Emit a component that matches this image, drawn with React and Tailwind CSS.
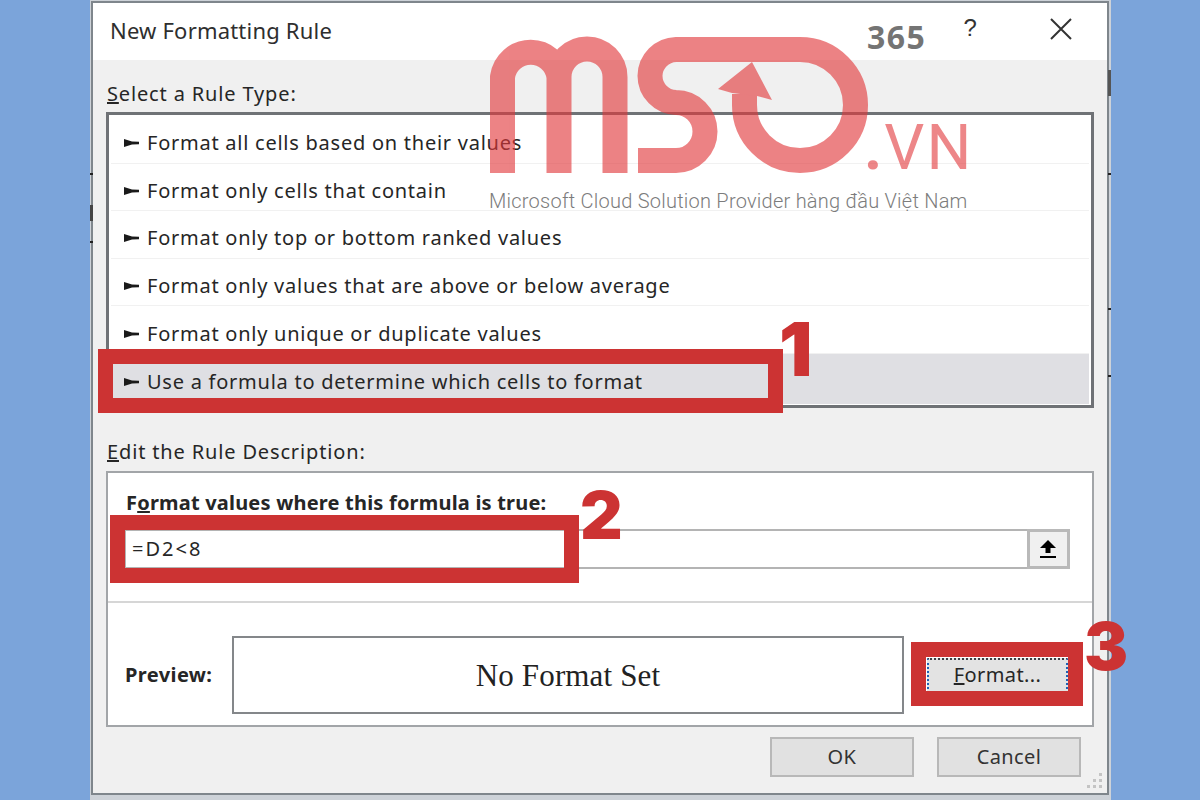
import React from "react";

const rules = [
  "Format all cells based on their values",
  "Format only cells that contain",
  "Format only top or bottom ranked values",
  "Format only values that are above or below average",
  "Format only unique or duplicate values",
  "Use a formula to determine which cells to format",
];

function Pointer() {
  return (
    <svg width="16" height="10" viewBox="0 0 16 10" className="shrink-0">
      <polygon points="1,1 9,3.5 16,3.8 16,6.2 9,6.5 1,9" fill="#1a1a1a" />
    </svg>
  );
}

function Annot({ className }) {
  return <div className={"absolute border-[15px] border-[#cc3333] " + className} />;
}

export default function App() {
  return (
    <div className="relative w-[1200px] h-[800px] overflow-hidden bg-[#7ba4da] font-['Noto_Sans',sans-serif] text-[#262626]">
      <div className="ml-[90px] w-[1021px] h-[800px] bg-[#cdd2d8] pt-[1px] pl-[1px] pr-[2px] pb-[5px]">
        <div className="h-full border-2 border-[#7f868c] flex flex-col bg-[#f0f0f0] relative">
          <div className="h-[57px] bg-white flex items-center pl-[17px] pb-[4px] text-[22px] leading-none tracking-[0.2px] text-[#2e2e2e]">
            New Formatting Rule
            <span className="ml-auto mr-[72px] text-[24px] font-['Liberation_Sans',sans-serif] text-[#333] mb-[4px]">?</span>
            <svg width="24" height="24" viewBox="0 0 24 24" className="mr-[34px] mb-[2px]">
              <path d="M2 2 L22 22 M22 2 L2 22" stroke="#333" strokeWidth="2" fill="none" />
            </svg>
          </div>

          <div className="flex-1 px-[13px] flex flex-col">
            <div className="h-[28px] mt-[20px] mb-[4px] pl-[1px] flex items-center text-[20px] tracking-[0.85px] leading-none">
              <span><span className="underline">S</span>elect a Rule Type:</span>
            </div>

            <div className="h-[296px] border-[3px] border-[#6f7276] bg-white px-[2px] pt-[1px]">
              {rules.map((r, i) => (
                <div
                  key={r}
                  className={
                    i === 5
                      ? "h-[50px] pt-[6px] pl-[12px] flex items-center gap-[8px] bg-[#dfdfe3] text-[20px] tracking-[0.75px] leading-none"
                      : "h-[47.6px] pt-[8px] pl-[12px] flex items-center gap-[8px] border-b border-[#f1f1f1] text-[20px] tracking-[0.75px] leading-none"
                  }
                >
                  <Pointer />
                  <span>{r}</span>
                </div>
              ))}
            </div>

            <div className="h-[28px] mt-[30px] mb-[5px] pl-[1px] flex items-center text-[20px] tracking-[0.85px] leading-none">
              <span><span className="underline">E</span>dit the Rule Description:</span>
            </div>

            <div className="h-[256px] border-2 border-[#a2a5a8] bg-white flex flex-col">
              <div className="h-[26px] mt-[17px] pl-[18px] flex items-center text-[20px] font-bold leading-none tracking-[0.2px]">
                <span>F<span className="underline">o</span>rmat values where this formula is true:</span>
              </div>
              <div className="ml-[16px] mt-[13px] w-[946px] h-[40px] border-2 border-[#b4b4b4] flex items-center">
                <span className="pl-[6px] text-[20px] leading-none tracking-[2px]">=D2&lt;8</span>
                <div className="ml-auto w-[43px] h-[40px] -mr-[2px] border-[3px] border-[#b9b9b9] bg-[#f0f0f0] flex items-center justify-center">
                  <svg width="18" height="20" viewBox="0 0 18 20" className="-ml-[2px]">
                    <path d="M9 1 L17 9 H11.5 V14 H6.5 V9 H1 Z" fill="#000" />
                    <rect x="1" y="17" width="16" height="2" fill="#000" />
                  </svg>
                </div>
              </div>
              <div className="mt-[32px] h-[2px] bg-[#d6d6d6]" />
              <div className="mt-[33px] flex items-center pl-[17px]">
                <span className="w-[107px] text-[20px] font-bold leading-none tracking-[0.4px]">Preview:</span>
                <div className="w-[672px] h-[78px] border-2 border-[#84878a] flex items-center justify-center font-['Liberation_Serif',serif] text-[31px] tracking-[0.15px] leading-none text-[#222]">
                  No Format Set
                </div>
                <div className="ml-[23px] w-[141px] h-[35px] bg-[#e3e3e3] border-2 border-dotted border-x-[#1f62b5] border-y-[#3a3f46] flex items-center justify-center text-[20px] tracking-[0.4px] leading-none">
                  <span><span className="underline">F</span>ormat...</span>
                </div>
              </div>
            </div>

            <div className="mt-[10px] flex justify-end gap-[23px] pr-[13px]">
              <div className="w-[144px] h-[40px] bg-[#e1e1e1] border-2 border-[#b8b8b8] flex items-center justify-center text-[20px] leading-none tracking-[0.4px] text-[#333]">OK</div>
              <div className="w-[144px] h-[40px] bg-[#e1e1e1] border-2 border-[#b8b8b8] flex items-center justify-center text-[20px] leading-none tracking-[0.4px] text-[#333]">Cancel</div>
            </div>
          </div>

          <svg width="20" height="20" viewBox="0 0 20 20" className="absolute right-[1px] bottom-[1px]">
            <g fill="#c4c4c4">
              <rect x="13" y="1" width="3" height="3" />
              <rect x="7" y="7" width="3" height="3" />
              <rect x="13" y="7" width="3" height="3" />
              <rect x="1" y="13" width="3" height="3" />
              <rect x="7" y="13" width="3" height="3" />
              <rect x="13" y="13" width="3" height="3" />
            </g>
          </svg>
        </div>
      </div>

      {/* bits of the sheet behind the dialog */}
      <div className="absolute left-[90px] top-[173px] w-[3px] h-[2px] bg-[#222]" />
      <div className="absolute left-[90px] top-[205px] w-[3px] h-[16px] bg-[#444]" />
      <div className="absolute left-[90px] top-[241px] w-[3px] h-[2px] bg-[#222]" />
      <div className="absolute left-[1108px] top-[70px] w-[3px] h-[26px] bg-[#555]" />
      <div className="absolute left-[1108px] top-[173px] w-[3px] h-[2px] bg-[#222]" />
      <div className="absolute left-[1108px] top-[308px] w-[3px] h-[2px] bg-[#222]" />
      <div className="absolute left-[1108px] top-[375px] w-[3px] h-[2px] bg-[#222]" />

      {/* watermark */}
      <svg width="1200" height="800" viewBox="0 0 1200 800" className="absolute inset-0 pointer-events-none">
        <g fill="none" stroke="#e2373a" strokeWidth="25" opacity="0.62">
          <path d="M502.5 173 V77 A28.5 28.5 0 0 1 559 77 V173 M559 77 A28 28 0 0 1 615 77 V173" />
          <path d="M638 160.5 H676 A29 29 0 0 0 705 131.5 A29 29 0 0 0 676 102.5 A26.75 26.75 0 0 1 650 75.75 A26.75 26.75 0 0 1 676 49.5 H800 A55.5 55.5 0 0 1 855.5 105 A55.5 55.5 0 0 1 800 160.5 A55.5 55.5 0 0 1 744.5 105 V94" />
          <polygon points="752,62 718,89 732,93 757,96 772,100" fill="#e2373a" stroke="none" />
        </g>
      </svg>
      <div className="absolute left-[864px] top-[112px] font-['Roboto',sans-serif] font-normal text-[63px] tracking-[2px] leading-[72px] text-[#e2373a] opacity-60">
        <span className="font-bold">.</span>VN
      </div>
      <div className="absolute left-[867px] top-[18px] font-['Open_Sans',sans-serif] font-bold text-[32px] leading-[38px] tracking-[1.5px] text-[#747474]">365</div>
      <div className="absolute left-[489px] top-[189px] font-['Roboto',sans-serif] font-light text-[20px] leading-[24px] tracking-[0.24px] text-[#7c7c7c]">
        Microsoft Cloud Solution Provider hàng đầu Việt Nam
      </div>

      {/* annotations */}
      <Annot className="left-[98px] top-[349px] w-[685px] h-[64px]" />
      <Annot className="left-[110px] top-[515px] w-[469px] h-[68px]" />
      <Annot className="left-[911px] top-[642px] w-[172px] h-[64px]" />
      <div className="absolute left-[779px] top-[309px] font-['Inter',sans-serif] font-black text-[74px] leading-[80px] text-[#cc3333]">1</div>
      <div className="absolute left-[580px] top-[479px] font-['Inter',sans-serif] font-black text-[66px] leading-[72px] text-[#cc3333]">2</div>
      <div className="absolute left-[1084px] top-[610px] font-['Inter',sans-serif] font-black text-[66px] leading-[72px] text-[#cc3333]">3</div>
    </div>
  );
}
